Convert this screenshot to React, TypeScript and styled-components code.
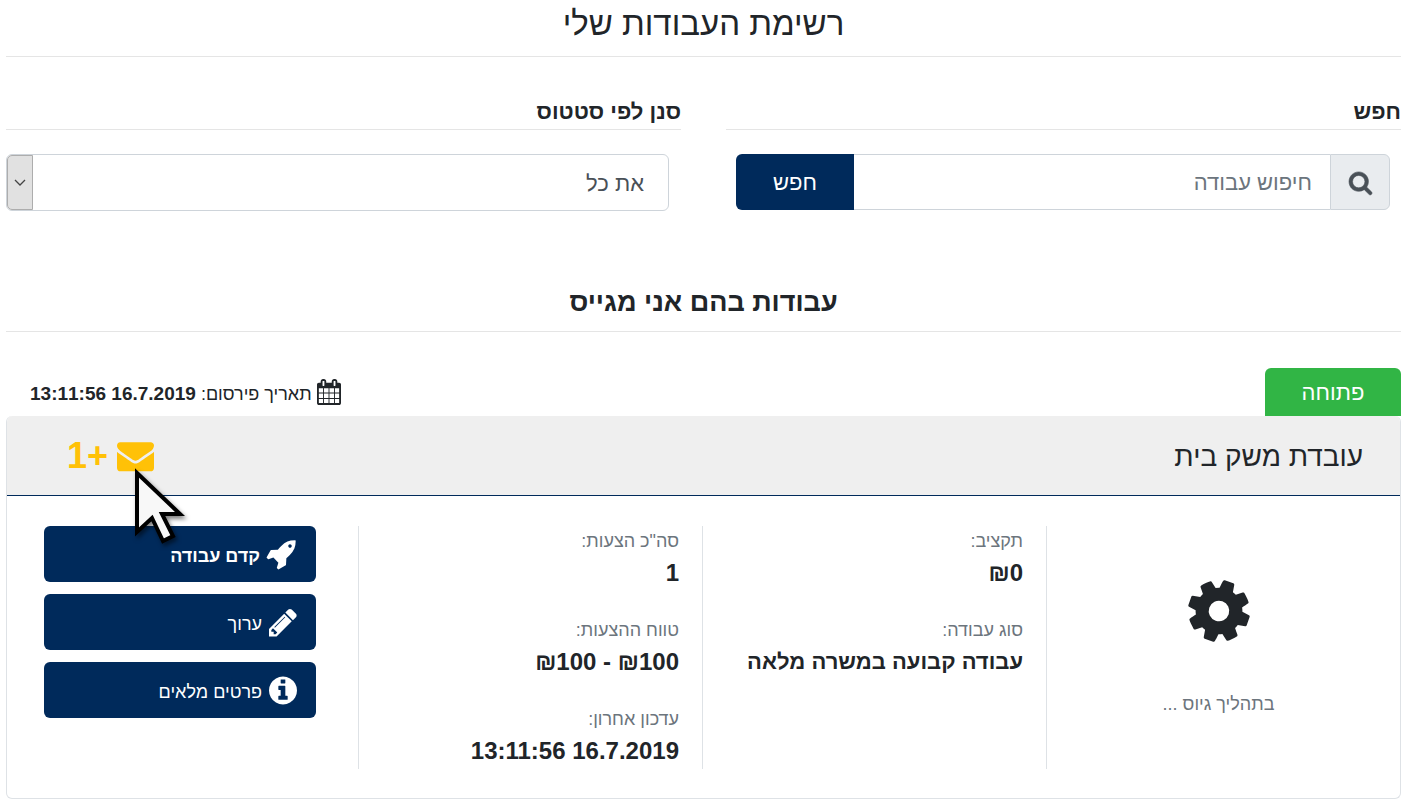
import React from 'react';
import styled, { createGlobalStyle } from 'styled-components';

const font = '"Liberation Sans", Arial, sans-serif';
const navy = '#002a5b';

const GlobalStyle = createGlobalStyle`
  *, *::before, *::after { box-sizing: border-box; }
  body {
    margin: 0;
    background: #fff;
    color: #212529;
    font-family: ${font};
    font-size: 22px;
    line-height: 36px;
  }
`;

const Page = styled.main`
  padding: 0 3px 10px 6px;
`;

const PageTitle = styled.h1`
  margin: 0;
  height: 57px;
  padding-top: 2px;
  border-bottom: 1px solid #e5e5e5;
  font-size: 33px;
  line-height: 44px;
  font-weight: 400;
  text-align: center;
`;

const SectionTitle = styled.h2`
  margin: 71px 0 36px;
  height: 50px;
  border-bottom: 1px solid #e5e5e5;
  font-size: 27px;
  line-height: 40px;
  font-weight: 700;
  text-align: center;
`;

const Filters = styled.form`
  display: grid;
  grid-template-columns: 1fr 1fr;
  gap: 45px;
  padding-top: 36px;
`;

const Field = styled.div`
  display: flex;
  flex-direction: column;
  gap: 24px;
`;

const FieldLabel = styled.label`
  height: 37px;
  border-bottom: 1px solid #e5e5e5;
  line-height: 38px;
  font-weight: 700;
`;

const InputGroup = styled.div`
  display: flex;
  height: 56px;
  margin: 0 11px 0 10px;
`;

const Addon = styled.span`
  display: flex;
  align-items: center;
  justify-content: center;
  width: 60px;
  border: 1px solid #ced4da;
  border-radius: 0 6px 6px 0;
  background: #e9ecef;
  color: #495057;
`;

const SearchInput = styled.input`
  flex: 1;
  min-width: 0;
  padding: 2px 18px 0;
  border: 1px solid #ced4da;
  border-width: 1px 0;
  background: #fff;
  color: #495057;
  font: 400 22px/36px ${font};
  &::placeholder { color: #6c757d; opacity: 1; }
`;

const SearchButton = styled.button`
  width: 118px;
  padding: 2px 0 0;
  border: 0;
  border-radius: 6px 0 0 6px;
  background: ${navy};
  color: #fff;
  font: 400 22px/36px ${font};
`;

const SelectBox = styled.div`
  position: relative;
  height: 57px;
  margin-right: 12px;
`;

const Select = styled.select`
  appearance: none;
  width: 100%;
  height: 100%;
  padding: 2px 24px 0;
  border: 1px solid #ced4da;
  border-radius: 6px;
  background: #fff;
  color: #495057;
  font: 400 22px/36px ${font};
`;

const SelectArrow = styled.span`
  position: absolute;
  inset: 1px auto 1px 1px;
  display: flex;
  align-items: center;
  justify-content: center;
  width: 26px;
  border: 1px solid #adadad;
  border-radius: 5px 0 0 5px;
  background: #e1e1e1;
  pointer-events: none;
`;

const JobMeta = styled.div`
  display: flex;
  justify-content: space-between;
`;

const Status = styled.span`
  width: 136px;
  height: 48px;
  border-radius: 6px 6px 0 0;
  background: #31b545;
  color: #fff;
  line-height: 50px;
  text-align: center;
`;

const Published = styled.div`
  display: flex;
  align-items: center;
  gap: 5px;
  padding-left: 24px;
  font-size: 18px;
`;

const Caption = styled.span`
  padding-top: 3px;
`;

const PublishedDate = styled.time`
  font-size: 19px;
  font-weight: 700;
`;

const Card = styled.article`
  border: 1px solid #dee2e6;
  border-top-width: 0;
  border-radius: 6px;
  overflow: hidden;
`;

const CardHeader = styled.header`
  display: flex;
  align-items: center;
  justify-content: space-between;
  height: 80px;
  padding: 0 37px 0 60px;
  border-bottom: 1px solid ${navy};
  background: #efefef;
`;

const JobTitle = styled.h3`
  margin: 0;
  padding-top: 2px;
  font-size: 28px;
  font-weight: 400;
`;

const Messages = styled.a`
  position: relative;
  display: flex;
  align-items: center;
  gap: 9px;
  color: #ffc107;
  font-size: 36px;
  line-height: 38px;
  font-weight: 700;
  text-decoration: none;
`;

const Cursor = styled.svg`
  position: absolute;
  top: 30px;
  right: -36px;
  overflow: visible;
  filter: drop-shadow(2px 3px 2px rgba(0, 0, 0, 0.5));
`;

const CardBody = styled.div`
  display: grid;
  grid-template-columns: repeat(4, 1fr);
  padding: 30px 10px 29px 7px;
`;

const Column = styled.div`
  padding: 0 23px;
  border-left: 1px solid #dee2e6;
`;

const Progress = styled(Column)`
  display: flex;
  flex-direction: column;
  align-items: center;
  gap: 39px;
  padding-top: 49px;
  color: #6c757d;
  font-size: 18px;
`;

const ProgressIcon = styled.span`
  display: flex;
  color: #212529;
`;

const Facts = styled.dl`
  display: flex;
  flex-direction: column;
  gap: 25px;
  margin: 0;
  padding-top: 1px;
`;

const FactLabel = styled.dt`
  color: #6c757d;
  font-size: 18px;
  line-height: 28px;
`;

const FactValue = styled.dd<{ $numeric?: boolean }>`
  margin: 0;
  font-size: ${({ $numeric }) => ($numeric ? 24 : 22)}px;
  font-weight: 700;
`;

const Actions = styled.div`
  display: flex;
  flex-direction: column;
  gap: 12px;
  padding: 0 42px 0 30px;
`;

const Action = styled.button<{ $bold?: boolean }>`
  display: flex;
  align-items: center;
  gap: 7px;
  height: 56px;
  padding: 0 19px;
  border: 0;
  border-radius: 6px;
  background: ${navy};
  color: #fff;
  font: ${({ $bold }) => ($bold ? 700 : 400)} 18px/36px ${font};
`;

const glyphs = {
  search: { x: 64, w: 1664, d: 'M1216 832q0-185-131.5-316.5t-316.5-131.5-316.5 131.5-131.5 316.5 131.5 316.5 316.5 131.5 316.5-131.5 131.5-316.5zm512 832q0 52-38 90t-90 38q-54 0-90-38l-343-342q-179 124-399 124-143 0-273.5-55.5t-225-150-150-225-55.5-273.5 55.5-273.5 150-225 225-150 273.5-55.5 273.5 55.5 225 150 150 225 55.5 273.5q0 220-124 399l343 343q37 37 37 90z' },
  calendar: { x: 64, w: 1664, d: 'M192 1664h288v-288h-288v288zm352 0h320v-288h-320v288zm-352-352h288v-320h-288v320zm352 0h320v-320h-320v320zm-352-384h288v-288h-288v288zm736 736h320v-288h-320v288zm-384-736h320v-288h-320v288zm768 736h288v-288h-288v288zm-384-352h320v-320h-320v320zm-352-864v-288q0-13-9.500-22.500t-22.500-9.500h-64q-13 0-22.500 9.500t-9.500 22.500v288q0 13 9.500 22.500t22.500 9.500h64q13 0 22.500-9.500t9.500-22.500zm736 864h288v-320h-288v320zm-384-384h320v-288h-320v288zm384 0h288v-288h-288v288zm32-480v-288q0-13-9.500-22.500t-22.500-9.500h-64q-13 0-22.500 9.500t-9.500 22.500v288q0 13 9.500 22.500t22.500 9.500h64q13 0 22.500-9.500t9.500-22.500zm384-64v1280q0 52-38 90t-90 38h-1408q-52 0-90-38t-38-90v-1280q0-52 38-90t90-38h128v-96q0-66 47-113t113-47h64q66 0 113 47t47 113v96h384v-96q0-66 47-113t113-47h64q66 0 113 47t47 113v96h128q52 0 90 38t38 90z' },
  envelope: { x: 0, w: 1792, d: 'M1792 710v794q0 66-47 113t-113 47h-1472q-66 0-113-47t-47-113v-794q44 49 101 87 362 246 497 345 57 42 92.500 65.500t94.500 48 110 24.500h2q51 0 110-24.500t94.500-48 92.500-65.500q170-123 498-345 57-39 100-87zm0-294q0 79-49 151t-122 123q-376 261-468 325-10 7-42.500 31t-54 38-52 32.500-57.500 27-50 9h-2q-23 0-50-9t-57.500-27-52-32.500-54-38-42.500-31q-91-64-262-182.500t-205-142.500q-62-42-117-115.500t-55-136.500q0-78 41.500-130t118.500-52h1472q65 0 112.500 47t47.500 113z' },
  cog: { x: 128, w: 1536, d: 'M1152 896q0-106-75-181t-181-75-181 75-75 181 75 181 181 75 181-75 75-181zm512-109v222q0 12-8 23t-20 13l-185 28q-19 54-39 91 35 50 107 138 10 12 10 25t-9 23q-27 37-99 108t-94 71q-12 0-26-9l-138-108q-44 23-91 38-16 136-29 186-7 28-36 28h-222q-14 0-24.500-8.500t-11.500-21.500l-28-184q-49-16-90-37l-141 107q-10 9-25 9-14 0-25-11-126-114-165-168-7-10-7-23 0-12 8-23 15-21 51-66.500t54-70.500q-27-50-41-99l-183-27q-13-2-21-12.500t-8-23.500v-222q0-12 8-23t19-13l186-28q14-46 39-92-40-57-107-138-10-12-10-24 0-10 9-23 26-36 98.500-107.500t94.500-71.500q13 0 26 10l138 107q44-23 91-38 16-136 29-186 7-28 36-28h222q14 0 24.500 8.500t11.500 21.500l28 184q49 16 90 37l142-107q9-9 24-9 13 0 25 10 129 119 165 170 7 8 7 22 0 12-8 23-15 21-51 66.500t-54 70.500q26 50 41 98l183 28q13 2 21 12.500t8 23.500z' },
  rocket: { x: 64, w: 1664, d: 'M1440 448q0-40-28-68t-68-28-68 28-28 68 28 68 68 28 68-28 28-68zm224-288q0 249-75.500 430.500t-253.500 360.500q-81 80-195 176l-20 379q-2 16-16 26l-384 224q-7 4-16 4-12 0-23-9l-64-64q-13-14-8-32l85-276-281-281-276 85q-3 1-9 1-14 0-23-9l-64-64q-17-19-5-39l224-384q10-14 26-16l379-20q96-114 176-195 188-187 358-258t431-71q14 0 24 9.500t10 22.500z' },
  pencil: { x: 128, w: 1536, d: 'M491 1536l91-91-235-235-91 91v107h128v128h107zm523-928q0-22-22-22-10 0-17 7l-542 542q-7 7-7 17 0 22 22 22 10 0 17-7l542-542q7-7 7-17zm-54-192l416 416-832 832h-416v-416zm683 96q0 53-37 90l-166 166-416-416 166-165q36-38 90-38 53 0 91 38l235 234q37 39 37 91z' },
  info: { x: 128, w: 1536, d: 'M1152 1376v-160q0-14-9-23t-23-9h-96v-512q0-14-9-23t-23-9h-320q-14 0-23 9t-9 23v160q0 14 9 23t23 9h96v320h-96q-14 0-23 9t-9 23v160q0 14 9 23t23 9h448q14 0 23-9t9-23zm-128-896v-160q0-14-9-23t-23-9h-192q-14 0-23 9t-9 23v160q0 14 9 23t23 9h192q14 0 23-9t9-23zm640 416q0 209-103 385.500t-279.500 279.500-385.500 103-385.500-103-279.500-279.500-103-385.500 103-385.500 279.500-279.500 385.500-103 385.500 103 279.500 279.500 103 385.500z' },
};

interface IconProps {
  name: keyof typeof glyphs;
  size: number;
  angle?: number;
  bold?: boolean;
}

function Icon({ name, size, angle = 0, bold = false }: IconProps) {
  const g = glyphs[name];
  return (
    <svg
      width={Math.round((size * g.w) / 1792)}
      height={size}
      viewBox={`${g.x} 0 ${g.w} 1792`}
      overflow="visible"
      aria-hidden="true"
    >
      <path
        d={g.d}
        fill="currentColor"
        stroke="currentColor"
        strokeWidth={bold ? 40 : 0}
        transform={`rotate(${angle} 896 896)`}
      />
    </svg>
  );
}

interface FactProps {
  label: string;
  numeric?: boolean;
  children: React.ReactNode;
}

function Fact({ label, numeric, children }: FactProps) {
  return (
    <div>
      <FactLabel>{label}</FactLabel>
      <FactValue $numeric={numeric}>
        {numeric ? <bdo dir="ltr">{children}</bdo> : children}
      </FactValue>
    </div>
  );
}

export default function App() {
  return (
    <Page dir="rtl" lang="he">
      <GlobalStyle />
      <PageTitle>רשימת העבודות שלי</PageTitle>

      <Filters onSubmit={(e) => e.preventDefault()}>
        <Field>
          <FieldLabel htmlFor="search">חפש</FieldLabel>
          <InputGroup>
            <Addon><Icon name="search" size={25} bold /></Addon>
            <SearchInput id="search" type="text" placeholder="חיפוש עבודה" />
            <SearchButton type="submit">חפש</SearchButton>
          </InputGroup>
        </Field>
        <Field>
          <FieldLabel htmlFor="status">סנן לפי סטטוס</FieldLabel>
          <SelectBox>
            <Select id="status"><option>את כל</option></Select>
            <SelectArrow>
              <svg width="12" height="7" viewBox="0 0 12 7" aria-hidden="true">
                <path d="M1 1l5 5 5-5" fill="none" stroke="#444" strokeWidth="1.3" />
              </svg>
            </SelectArrow>
          </SelectBox>
        </Field>
      </Filters>

      <SectionTitle>עבודות בהם אני מגייס</SectionTitle>

      <JobMeta>
        <Status>פתוחה</Status>
        <Published>
          <Icon name="calendar" size={26} />
          <Caption>תאריך פירסום: <PublishedDate dir="ltr">13:11:56 16.7.2019</PublishedDate></Caption>
        </Published>
      </JobMeta>

      <Card>
        <CardHeader>
          <JobTitle>עובדת משק בית</JobTitle>
          <Messages href="#messages">
            <Icon name="envelope" size={37} />
            <span dir="ltr">1+</span>
            <Cursor width="60" height="80" viewBox="0 0 60 80" aria-hidden="true">
              <path d="M7 6V65L22 51L33 74L43 69L32 47H50Z" fill="#f8f8f8" stroke="#000" strokeWidth="4" />
            </Cursor>
          </Messages>
        </CardHeader>
        <CardBody>
          <Progress>
            <ProgressIcon><Icon name="cog" size={72} angle={19} /></ProgressIcon>
            <span>בתהליך גיוס ...</span>
          </Progress>
          <Column>
            <Facts>
              <Fact label="תקציב:" numeric>₪0</Fact>
              <Fact label="סוג עבודה:">עבודה קבועה במשרה מלאה</Fact>
            </Facts>
          </Column>
          <Column>
            <Facts>
              <Fact label={'סה"כ הצעות:'} numeric>1</Fact>
              <Fact label="טווח ההצעות:" numeric>₪100 - ₪100</Fact>
              <Fact label="עדכון אחרון:" numeric>13:11:56 16.7.2019</Fact>
            </Facts>
          </Column>
          <Actions>
            <Action type="button" $bold><Icon name="rocket" size={32} /><Caption>קדם עבודה</Caption></Action>
            <Action type="button"><Icon name="pencil" size={33} /><Caption>ערוך</Caption></Action>
            <Action type="button"><Icon name="info" size={33} /><Caption>פרטים מלאים</Caption></Action>
          </Actions>
        </CardBody>
      </Card>
    </Page>
  );
}
